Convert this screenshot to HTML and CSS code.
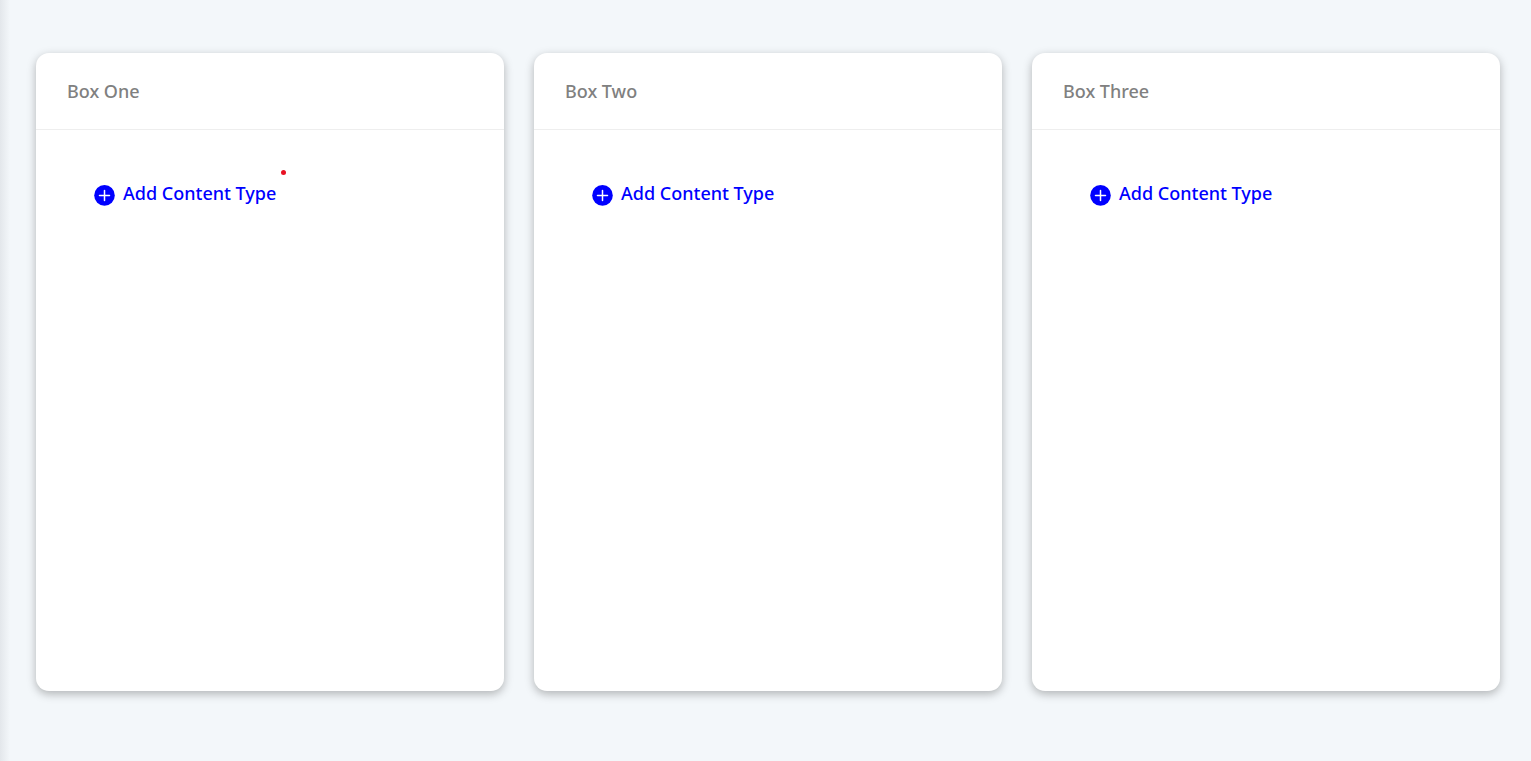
FILE: index.html
```
<!DOCTYPE html>
<html lang="en">
<head>
<meta charset="utf-8">
<title>Content boxes</title>
<link rel="stylesheet" href="styles.css">
</head>
<body>
<main class="board">
  <section class="card">
    <h2 class="card-title">Box One</h2>
    <div class="card-body">
      <button class="add" type="button">
        <svg class="add-icon" viewBox="0 0 22 22" aria-hidden="true"><circle cx="11.5" cy="11.4" r="10.3" fill="currentColor"/><path d="M11.5 6.4v10M6.5 11.4h10" stroke="#fff" stroke-width="1.5" stroke-linecap="round"/></svg>
        <span class="add-label">Add Content Type<span class="dot"></span></span>
      </button>
    </div>
  </section>
  <section class="card">
    <h2 class="card-title">Box Two</h2>
    <div class="card-body">
      <button class="add" type="button">
        <svg class="add-icon" viewBox="0 0 22 22" aria-hidden="true"><circle cx="11.5" cy="11.4" r="10.3" fill="currentColor"/><path d="M11.5 6.4v10M6.5 11.4h10" stroke="#fff" stroke-width="1.5" stroke-linecap="round"/></svg>
        <span class="add-label">Add Content Type</span>
      </button>
    </div>
  </section>
  <section class="card">
    <h2 class="card-title">Box Three</h2>
    <div class="card-body">
      <button class="add" type="button">
        <svg class="add-icon" viewBox="0 0 22 22" aria-hidden="true"><circle cx="11.5" cy="11.4" r="10.3" fill="currentColor"/><path d="M11.5 6.4v10M6.5 11.4h10" stroke="#fff" stroke-width="1.5" stroke-linecap="round"/></svg>
        <span class="add-label">Add Content Type</span>
      </button>
    </div>
  </section>
</main>
</body>
</html>
```
FILE: styles.css
```
* {
  box-sizing: border-box;
}

body {
  margin: 0;
  background: linear-gradient(to right, #e3e7eb, #f3f7fa 10px);
  font-family: "Noto Sans", "Open Sans", sans-serif;
}

.board {
  display: grid;
  grid-template-columns: repeat(3, 1fr);
  gap: 30px;
  min-height: 100vh;
  padding: 53px 31px 70px 36px;
}

.card {
  background: #fff;
  border-radius: 13px;
  box-shadow: 0 3px 10px rgba(0, 0, 0, 0.28);
}

.card-title {
  margin: 0;
  padding: 26px 31px;
  border-bottom: 1px solid #eee;
  color: #808080;
  font-size: 18px;
  font-weight: 500;
  line-height: 24px;
}

.card-body {
  padding: 51px 57px;
}

.add {
  display: flex;
  align-items: flex-end;
  gap: 8px;
  padding: 0;
  border: 0;
  background: none;
  color: #00f;
  font: inherit;
  font-size: 18px;
  font-weight: 500;
  line-height: 24px;
  cursor: pointer;
}

.add-icon {
  width: 22px;
  height: 22px;
}

.add-label {
  position: relative;
  padding-bottom: 1px;
}

.dot {
  position: absolute;
  top: -11px;
  right: -10px;
  width: 5px;
  height: 5px;
  border-radius: 50%;
  background: #e81123;
}
```
